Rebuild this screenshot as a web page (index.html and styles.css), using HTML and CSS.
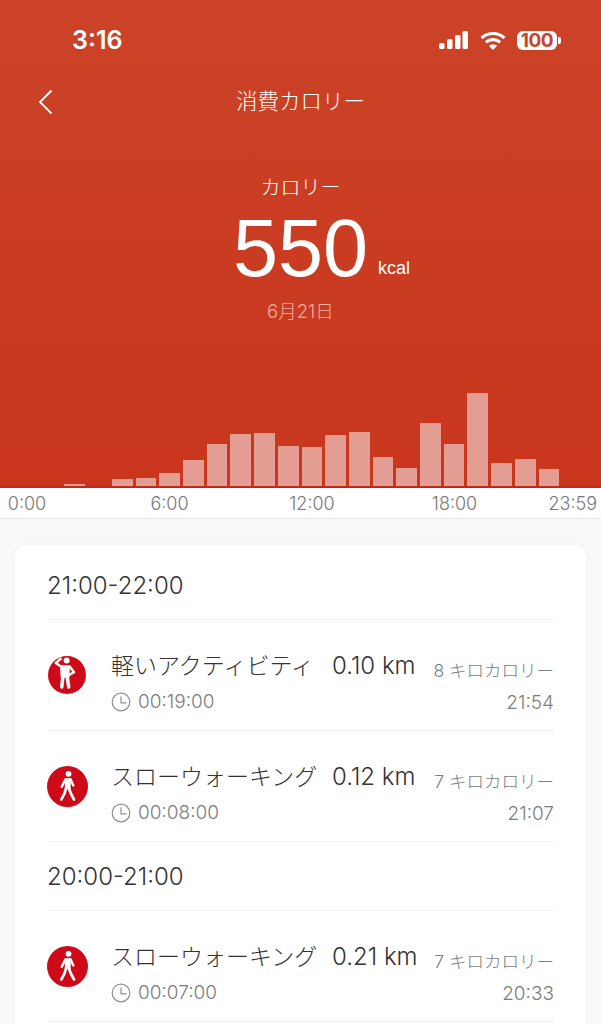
FILE: index.html
```html
<!DOCTYPE html>
<html lang="ja">
<head>
    <meta charset="UTF-8">
    <meta name="viewport" content="width=device-width, initial-scale=1.0">
    <title>消費カロリー</title>
    <link rel="stylesheet" href="styles.css">
</head>
<body>
    <header class="hero">
        <div class="status-bar">
            <span class="clock">3:16</span>
            <div class="status-icons">
                <svg class="signal" width="29" height="18" viewBox="0 0 29 18" fill="#fff">
                    <rect x="0" y="12" width="5.500" height="6" rx="1.500"/>
                    <rect x="8" y="8" width="5.500" height="10" rx="1.500"/>
                    <rect x="16" y="4" width="5.500" height="14" rx="1.500"/>
                    <rect x="23.500" y="0" width="5.500" height="18" rx="1.500"/>
                </svg>
                <svg class="wifi" width="26" height="19" viewBox="0 0 26 19" fill="none" stroke="#fff" stroke-width="3.200">
                    <path d="M1.500 7C8 1 18 1 24.500 7"/>
                    <path d="M5.800 11.300C10 7.800 16 7.800 20.200 11.300"/>
                    <path d="M13 19L8.800 14.800C11 13 15 13 17.200 14.800Z" fill="#fff" stroke="none"/>
                </svg>
                <div class="battery"><span class="battery-level">100</span><i class="battery-tip"></i></div>
            </div>
        </div>
        <nav class="nav-bar">
            <svg class="back" width="16" height="26" viewBox="0 0 16 26" fill="none" stroke="#fff" stroke-width="1.800">
                <path d="M13.500 1.500L2 13l11.500 11.500"/>
            </svg>
            <h1 class="nav-title">消費カロリー</h1>
        </nav>
        <div class="summary">
            <div class="summary-label">カロリー</div>
            <div class="summary-value"><span class="summary-number">550</span><span class="summary-unit">kcal</span></div>
            <div class="summary-date">6月21日</div>
        </div>
        <div class="chart">
            <i class="bar" style="height:0"></i>
            <i class="bar" style="height:0"></i>
            <i class="bar" style="height:2px"></i>
            <i class="bar" style="height:0"></i>
            <i class="bar" style="height:7px"></i>
            <i class="bar" style="height:8px"></i>
            <i class="bar" style="height:13px"></i>
            <i class="bar" style="height:26px"></i>
            <i class="bar" style="height:42px"></i>
            <i class="bar" style="height:52px"></i>
            <i class="bar" style="height:53px"></i>
            <i class="bar" style="height:40px"></i>
            <i class="bar" style="height:39px"></i>
            <i class="bar" style="height:51px"></i>
            <i class="bar" style="height:54px"></i>
            <i class="bar" style="height:29px"></i>
            <i class="bar" style="height:18px"></i>
            <i class="bar" style="height:63px"></i>
            <i class="bar" style="height:42px"></i>
            <i class="bar" style="height:93px"></i>
            <i class="bar" style="height:23px"></i>
            <i class="bar" style="height:27px"></i>
            <i class="bar" style="height:17px"></i>
            <i class="bar" style="height:0"></i>
        </div>
    </header>

    <div class="axis">
        <span class="tick">0:00</span>
        <span class="tick">6:00</span>
        <span class="tick">12:00</span>
        <span class="tick">18:00</span>
        <span class="tick-end">23:59</span>
    </div>

    <main class="card">
        <h2 class="hour first">21:00-22:00</h2>

        <div class="row">
            <span class="badge small">
                <svg viewBox="24 24 108 108" fill="none" stroke="#fff" stroke-linecap="round" stroke-linejoin="round">
                    <circle cx="77" cy="37" r="8.500" fill="#fff" stroke="none"/>
                    <path d="M58 50H86L85 86H60Z" fill="#fff" stroke="none"/>
                    <path d="M60 53L46 44L60 32" stroke-width="7"/>
                    <path d="M85 53L98 70L84 78" stroke-width="7"/>
                    <path d="M66 86L63 112M79 86L83 112" stroke-width="10"/>
                </svg>
            </span>
            <div class="row-body">
                <div class="row-title"><span class="row-name">軽いアクティビティ</span><span class="row-dist">0.10 km</span></div>
                <div class="row-time">
                    <svg class="clock-icon" width="20" height="20" viewBox="0 0 20 20" fill="none" stroke="#8f8f8f" stroke-width="1.200"><circle cx="10" cy="10" r="8.800"/><path d="M10 4.500V10.800H15.500"/></svg>
                    <span>00:19:00</span>
                </div>
            </div>
            <div class="row-side"><span class="kcal">8 キロカロリー</span><span>21:54</span></div>
        </div>

        <div class="row">
            <span class="badge">
                <svg viewBox="15 15 120 120" fill="none" stroke="#fff" stroke-linecap="round" stroke-linejoin="round">
                    <circle cx="78" cy="38" r="8.500" fill="#fff" stroke="none"/>
                    <path d="M68 51H85L84 82H67Z" fill="#fff" stroke="none"/>
                    <path d="M69 54L58 76" stroke-width="7"/>
                    <path d="M84 54L92 72" stroke-width="7"/>
                    <path d="M71 80L66 96L57 113M79 80L85 96L94 113" stroke-width="8"/>
                </svg>
            </span>
            <div class="row-body">
                <div class="row-title"><span class="row-name">スローウォーキング</span><span class="row-dist">0.12 km</span></div>
                <div class="row-time">
                    <svg class="clock-icon" width="20" height="20" viewBox="0 0 20 20" fill="none" stroke="#8f8f8f" stroke-width="1.200"><circle cx="10" cy="10" r="8.800"/><path d="M10 4.500V10.800H15.500"/></svg>
                    <span>00:08:00</span>
                </div>
            </div>
            <div class="row-side"><span class="kcal">7 キロカロリー</span><span>21:07</span></div>
        </div>

        <h2 class="hour">20:00-21:00</h2>

        <div class="row">
            <span class="badge">
                <svg viewBox="15 15 120 120" fill="none" stroke="#fff" stroke-linecap="round" stroke-linejoin="round">
                    <circle cx="78" cy="38" r="8.500" fill="#fff" stroke="none"/>
                    <path d="M68 51H85L84 82H67Z" fill="#fff" stroke="none"/>
                    <path d="M69 54L58 76" stroke-width="7"/>
                    <path d="M84 54L92 72" stroke-width="7"/>
                    <path d="M71 80L66 96L57 113M79 80L85 96L94 113" stroke-width="8"/>
                </svg>
            </span>
            <div class="row-body">
                <div class="row-title"><span class="row-name">スローウォーキング</span><span class="row-dist">0.21 km</span></div>
                <div class="row-time">
                    <svg class="clock-icon" width="20" height="20" viewBox="0 0 20 20" fill="none" stroke="#8f8f8f" stroke-width="1.200"><circle cx="10" cy="10" r="8.800"/><path d="M10 4.500V10.800H15.500"/></svg>
                    <span>00:07:00</span>
                </div>
            </div>
            <div class="row-side"><span class="kcal">7 キロカロリー</span><span>20:33</span></div>
        </div>
    </main>
</body>
</html>
```

FILE: styles.css
```css
html, body {
    height: 1024px;
    overflow: hidden;
}

body {
    margin: 0;
    background: #f9f9f9;
    font-family: Inter, "Noto Sans CJK JP", sans-serif;
    color: #333;
}

.hero {
    height: 488px;
    box-sizing: border-box;
    display: flex;
    flex-direction: column;
    background: linear-gradient(#cb4328, #c9361d);
    border-bottom: 2px solid #c1291a;
    color: #fff;
}

.status-bar {
    height: 78px;
    box-sizing: border-box;
    padding: 25px 40px 0 72px;
    display: flex;
    justify-content: space-between;
    align-items: flex-start;
}

.clock {
    font-family: Inter, sans-serif;
    font-weight: 600;
    font-size: 25px;
    line-height: 30px;
}

.status-icons {
    display: flex;
    align-items: center;
    gap: 11px;
    height: 30px;
    padding-right: 4px;
}

.signal {
    margin-right: 1px;
}

.battery {
    position: relative;
    width: 40px;
    height: 19px;
    border-radius: 6px;
    background: #fff;
    display: flex;
    align-items: center;
    justify-content: center;
}

.battery-level {
    font-family: Inter, sans-serif;
    font-weight: 700;
    font-size: 19px;
    letter-spacing: -0.5px;
    color: #cb4328;
}

.battery-tip {
    position: absolute;
    left: 41px;
    top: 6px;
    width: 3px;
    height: 7px;
    border-radius: 0 2px 2px 0;
    background: #fff;
}

.nav-bar {
    height: 42px;
    position: relative;
    display: flex;
    align-items: center;
    justify-content: center;
}

.back {
    position: absolute;
    left: 38px;
    top: 11px;
}

.nav-title {
    margin: 0;
    font-weight: 300;
    font-size: 21.500px;
}

.summary {
    margin-top: 53px;
    text-align: center;
}

.summary-label {
    font-weight: 300;
    font-size: 20px;
    line-height: 30px;
}

.summary-value {
    position: relative;
    height: 90px;
    line-height: 90px;
}

.summary-number {
    font-family: "Liberation Sans", sans-serif;
    font-size: 81px;
}

.summary-unit {
    position: absolute;
    left: 378px;
    top: 20px;
    font-family: "Liberation Sans", sans-serif;
    font-size: 18px;
}

.summary-date {
    margin-top: 6px;
    font-size: 18.500px;
    font-weight: 300;
    line-height: 24px;
    color: #eeb0a2;
}

.chart {
    margin-top: auto;
    height: 94px;
    box-sizing: border-box;
    padding: 0 18px 0 17px;
    display: grid;
    grid-template-columns: repeat(24, 1fr);
    column-gap: 3px;
    align-items: end;
}

.bar {
    display: block;
    background: #e39d92;
}

.axis {
    height: 31px;
    box-sizing: border-box;
    background: #fff;
    border-bottom: 1px solid #e8e8e8;
    padding: 0 4px 0 7px;
    display: flex;
    align-items: center;
    font-size: 18px;
    font-weight: 300;
    color: #777;
}

.tick {
    flex: none;
    width: 40px;
    display: flex;
    justify-content: center;
    white-space: nowrap;
}

.tick + .tick {
    margin-left: 102.500px;
}

.tick-end {
    margin-left: auto;
}

.card {
    margin: 26px 15px 0;
    padding: 0 32px;
    height: 520px;
    border-radius: 12px;
    background: #fff;
    box-shadow: 0 0 10px rgba(0, 0, 0, 0.03);
}

.hour {
    margin: 0;
    height: 69px;
    box-sizing: border-box;
    border-bottom: 1px solid #f3f3f3;
    display: flex;
    align-items: center;
    font-size: 24px;
    font-weight: 300;
    color: #333;
}

.hour.first {
    height: 75px;
    padding-top: 7px;
}

.row {
    height: 111px;
    box-sizing: border-box;
    border-bottom: 1px solid #f3f3f3;
    display: flex;
    align-items: center;
}

.badge {
    flex: none;
    width: 41px;
    height: 41px;
    margin-right: 23px;
    border-radius: 50%;
    background: #cf0a18;
    display: flex;
    align-items: center;
    justify-content: center;
}

.badge.small {
    width: 38px;
    height: 38px;
    margin: 0 25px 0 1px;
}

.badge svg {
    width: 100%;
    height: 100%;
}

.row-body {
    flex: 1;
    padding-top: 15px;
}

.row-title {
    display: flex;
    font-size: 23px;
    font-weight: 300;
    line-height: 30px;
    color: #333;
}

.row-name {
    width: 221px;
    flex: none;
    white-space: nowrap;
}

.row-dist {
    white-space: nowrap;
    font-size: 24px;
}

.row-time {
    margin-top: 9px;
    display: flex;
    align-items: center;
    gap: 7px;
    font-size: 19px;
    font-weight: 300;
    line-height: 24px;
    color: #7d7d7d;
}

.row-side {
    flex: none;
    display: flex;
    flex-direction: column;
    align-items: flex-end;
    gap: 8px;
    font-size: 19px;
    font-weight: 300;
    line-height: 24px;
    color: #7d7d7d;
    padding-top: 23px;
}

.kcal {
    font-size: 17.500px;
}
```
